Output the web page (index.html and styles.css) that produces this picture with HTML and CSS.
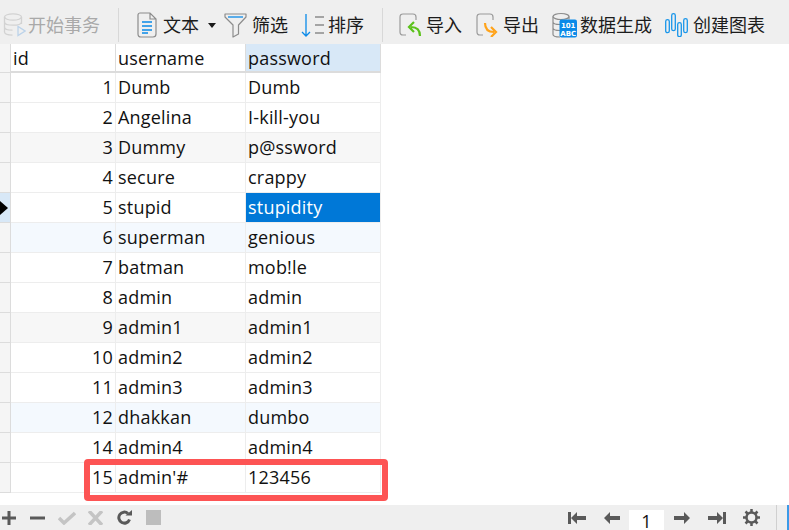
FILE: index.html
```html
<!DOCTYPE html>
<html lang="zh">
<head>
<meta charset="utf-8">
<title>users</title>
<link rel="stylesheet" href="styles.css">
</head>
<body>
<div class="app">
  <header class="toolbar">
    <div class="tool disabled tool-begin">
      <svg class="ic" width="24" height="26" viewBox="0 0 24 26" fill="none" stroke="#d2d2d2" stroke-width="1.3"><ellipse cx="11" cy="5" rx="8.5" ry="3.2"/><path d="M2.5 5v15c0 2 3 3 8 3.2M19.500 5v7M2.500 10c0 2 3.500 3.200 8.500 3.200s8.500-1.200 8.500-3.200M2.500 15c0 2 3 3.200 8 3.200"/><path d="M16 14.500v9l7-4.500z" stroke="#bcd3ea"/></svg>
      <span>开始事务</span>
    </div>
    <i class="sep sep-a"></i>
    <div class="tool tool-text">
      <svg class="ic" width="20" height="26" viewBox="0 0 20 26" fill="none"><path d="M3 1h10l6 6v15c0 2-1 3-3 3H4c-2 0-3-1-3-3V3c0-1 1-2 2-2zM13 1v6h6" stroke="#8c8c8c" stroke-width="1.200"/><path d="M5 10h10M5 14h10M5 18h10M5 21h6" stroke="#0a8ae8" stroke-width="1.300"/></svg>
      <span>文本</span>
      <svg class="caret" width="8" height="5" viewBox="0 0 8 5"><path d="M0 0h8L4 5z" fill="#1a1a1a"/></svg>
    </div>
    <div class="tool tool-filter">
      <svg class="ic" width="23" height="26" viewBox="0 0 23 26" fill="none"><path d="M1 2h21v3l-7.500 8v9L9 25V13L1 5z" stroke="#8c8c8c" stroke-width="1.200" stroke-linejoin="round"/><path d="M4 5h15" stroke="#0a8ae8" stroke-width="1.300"/></svg>
      <span>筛选</span>
    </div>
    <div class="tool tool-sort">
      <svg class="ic" width="24" height="26" viewBox="0 0 24 26" fill="none"><path d="M5 2v22M1 20l4 4 4-4" stroke="#0a8ae8" stroke-width="1.300"/><path d="M14 5h9M14 13h9M14 21h9" stroke="#8c8c8c" stroke-width="1.300"/></svg>
      <span>排序</span>
    </div>
    <i class="sep sep-b"></i>
    <div class="tool tool-import">
      <svg class="ic" width="23" height="24" viewBox="0 0 23 24" fill="none"><path d="M7 22H4c-2 0-3-1-3-3V4c0-2 1-3 3-3h10c2 0 3 1 3 3v3" stroke="#9a9a9a" stroke-width="1.200"/><path d="M21 23c0-6-3-9-9-9M15 9l-5 5 5 5" stroke="#5cc21c" stroke-width="2.200"/></svg>
      <span>导入</span>
    </div>
    <div class="tool tool-export">
      <svg class="ic" width="23" height="24" viewBox="0 0 23 24" fill="none"><path d="M7 22H4c-2 0-3-1-3-3V4c0-2 1-3 3-3h10c2 0 3 1 3 3v3" stroke="#9a9a9a" stroke-width="1.200"/><path d="M9 10c0 6 3 9 9 9M15 14l5 5-5 5" stroke="#ffa31a" stroke-width="2.200"/></svg>
      <span>导出</span>
    </div>
    <div class="tool tool-gen">
      <svg class="ic" width="25" height="26" viewBox="0 0 25 26" fill="none" stroke="#8c8c8c" stroke-width="1.200"><ellipse cx="9" cy="4.500" rx="8" ry="3"/><path d="M1 4.500v18c0 1.500 3 2.500 7 2.500M17 4.500v3M1 10c0 1.500 3 2.500 7 2.500M1 16c0 1.500 3 2.500 7 2.500"/><rect x="7.500" y="7.500" width="17.500" height="18" rx="2" fill="#0a8ae8" stroke="none"/><text x="16.200" y="15.500" class="gen-t">101</text><text x="16.200" y="23.500" class="gen-t">ABC</text></svg>
      <span>数据生成</span>
    </div>
    <div class="tool tool-chart">
      <svg class="ic" width="23" height="24" viewBox="0 0 23 24" fill="none" stroke="#1a96ea" stroke-width="1.300"><rect x="0.700" y="6.700" width="3.600" height="13" rx="1.800"/><rect x="6.700" y="0.700" width="3.600" height="17" rx="1.800"/><rect x="12.700" y="9.700" width="3.600" height="14" rx="1.800"/><rect x="18.700" y="5.700" width="3.600" height="14" rx="1.800"/></svg>
      <span>创建图表</span>
    </div>
  </header>

  <main class="grid">
    <div class="row head"><div class="mark"></div><div class="cell">id</div><div class="cell">username</div><div class="cell focus-head">password</div></div>
    <div class="row"><div class="mark"></div><div class="cell num">1</div><div class="cell">Dumb</div><div class="cell">Dumb</div></div>
    <div class="row"><div class="mark"></div><div class="cell num">2</div><div class="cell">Angelina</div><div class="cell">I-kill-you</div></div>
    <div class="row gray"><div class="mark"></div><div class="cell num">3</div><div class="cell">Dummy</div><div class="cell">p@ssword</div></div>
    <div class="row"><div class="mark"></div><div class="cell num">4</div><div class="cell">secure</div><div class="cell">crappy</div></div>
    <div class="row"><div class="mark current"><svg width="8" height="14" viewBox="0 0 8 14"><path d="M0 0l8 7-8 7z" fill="#000"/></svg></div><div class="cell num">5</div><div class="cell">stupid</div><div class="cell selected">stupidity</div></div>
    <div class="row blue"><div class="mark"></div><div class="cell num">6</div><div class="cell">superman</div><div class="cell">genious</div></div>
    <div class="row"><div class="mark"></div><div class="cell num">7</div><div class="cell">batman</div><div class="cell">mob!le</div></div>
    <div class="row"><div class="mark"></div><div class="cell num">8</div><div class="cell">admin</div><div class="cell">admin</div></div>
    <div class="row gray"><div class="mark"></div><div class="cell num">9</div><div class="cell">admin1</div><div class="cell">admin1</div></div>
    <div class="row"><div class="mark"></div><div class="cell num">10</div><div class="cell">admin2</div><div class="cell">admin2</div></div>
    <div class="row"><div class="mark"></div><div class="cell num">11</div><div class="cell">admin3</div><div class="cell">admin3</div></div>
    <div class="row blue"><div class="mark"></div><div class="cell num">12</div><div class="cell">dhakkan</div><div class="cell">dumbo</div></div>
    <div class="row"><div class="mark"></div><div class="cell num">14</div><div class="cell">admin4</div><div class="cell">admin4</div></div>
    <div class="row"><div class="mark"></div><div class="cell num">15</div><div class="cell">admin'#</div><div class="cell">123456</div></div>
    <div class="redbox"></div>
  </main>

  <footer class="statusbar">
    <div class="left-tools">
      <svg class="b-plus" width="14" height="14" viewBox="0 0 14 14"><path d="M0 7h14M7 0v14" stroke="#595959" stroke-width="3"/></svg>
      <svg class="b-minus" width="15" height="14" viewBox="0 0 15 14"><path d="M0 7h15" stroke="#595959" stroke-width="3"/></svg>
      <svg class="b-check" width="18" height="14" viewBox="0 0 18 14" fill="none"><path d="M1 7l5 5L17 2" stroke="#c4c4c4" stroke-width="3.500"/></svg>
      <svg class="b-x" width="15" height="14" viewBox="0 0 15 14" fill="none"><path d="M1 0l13 14M14 0L1 14" stroke="#c4c4c4" stroke-width="3.500"/></svg>
      <svg class="b-ref" width="15" height="15" viewBox="0 0 15 15" fill="none"><path d="M12.500 9.500A5.500 5.500 0 1 1 11 3.500" stroke="#595959" stroke-width="3"/><path d="M8.500 5.500H15V0z" fill="#595959"/></svg>
      <svg class="b-stop" width="15" height="15" viewBox="0 0 15 15"><rect width="15" height="15" fill="#bdbdbd"/></svg>
    </div>
    <div class="pager">
      <svg class="b-first" width="18" height="12" viewBox="0 0 18 12"><path d="M0 0h3v12H0zM3 6l6-6v4h9v4H9v4z" fill="#595959"/></svg>
      <svg class="b-prev" width="16" height="12" viewBox="0 0 16 12"><path d="M0 6l6-6v4h10v4H6v4z" fill="#595959"/></svg>
      <div class="page">1</div>
      <svg class="b-next" width="16" height="12" viewBox="0 0 16 12"><path d="M16 6l-6-6v4H0v4h10v4z" fill="#595959"/></svg>
      <svg class="b-last" width="18" height="12" viewBox="0 0 18 12"><path d="M18 0h-3v12h3zM15 6L9 0v4H0v4h9v4z" fill="#595959"/></svg>
      <svg class="b-gear" width="17" height="17" viewBox="0 0 17 17" fill="none"><circle cx="8.500" cy="8.500" r="5" stroke="#595959" stroke-width="2.500"/><path d="M8.500 0v3M8.500 14v3M0 8.500h3M14 8.500h3M2.500 2.500l2 2M12.500 12.500l2 2M14.500 2.500l-2 2M4.500 12.500l-2 2" stroke="#595959" stroke-width="2.500"/></svg>
      <i class="bar-sep"></i>
      <i class="blue-edge"></i>
    </div>
  </footer>
</div>
</body>
</html>
```

FILE: styles.css
```css
html, body {
  margin: 0;
  padding: 0;
  background: #fff;
}
.app {
  width: 789px;
  height: 530px;
  display: flex;
  flex-direction: column;
  overflow: hidden;
  font-family: "Noto Sans CJK SC", "Noto Sans", sans-serif;
}
.toolbar {
  height: 44px;
  flex: none;
  background: #efefef;
  display: flex;
  align-items: center;
  box-sizing: border-box;
  padding: 6px 0 0 2px;
  font-size: 18px;
  color: #1c1c1c;
  white-space: nowrap;
}
.tool {
  display: flex;
  align-items: center;
}
.tool span {
  line-height: 26px;
  margin-bottom: 2px;
}
.ic {
  flex: none;
}
.disabled {
  color: #a9a9a9;
}
.tool-begin span { margin-left: 2px; }
.sep {
  width: 1px;
  height: 34px;
  background: #d8d8d8;
  flex: none;
}
.sep-a { margin-left: 18px; }
.tool-text { margin-left: 18px; }
.tool-text span { margin-left: 6px; }
.caret { margin-left: 9px; }
.tool-filter { margin-left: 8px; }
.tool-filter span { margin-left: 5px; }
.tool-sort { margin-left: 13px; }
.tool-sort span { margin-left: 3px; }
.sep-b { margin-left: 18px; }
.tool-import { margin-left: 16px; }
.tool-import span { margin-left: 4px; }
.tool-export { margin-left: 14px; }
.tool-export span { margin-left: 4px; }
.tool-gen { margin-left: 13px; }
.tool-gen span { margin-left: 3px; }
.tool-chart { margin-left: 13px; }
.tool-chart span { margin-left: 5px; }
.gen-t {
  font-family: "DejaVu Sans", sans-serif;
  font-size: 7px;
  font-weight: 700;
  fill: #fff;
  stroke: none;
  text-anchor: middle;
}

.grid {
  position: relative;
  flex: 1;
  font-family: "Open Sans", "Noto Sans", sans-serif;
  font-size: 18px;
  letter-spacing: 0.2px;
  color: #111;
}
.row {
  display: grid;
  grid-template-columns: 11px 105px 130px 135px;
  width: 381px;
  height: 30px;
  box-sizing: border-box;
}
.head {
  height: 29px;
}
.mark {
  box-sizing: border-box;
  background: #f5f5f5;
  border-right: 1px solid #dcdcdc;
  border-bottom: 1px solid #dcdcdc;
  display: flex;
  align-items: center;
}
.current {
  background: #d8e8f7;
}
.cell {
  box-sizing: border-box;
  padding: 0 2px;
  border-right: 1px solid #ededed;
  border-bottom: 1px solid #ededed;
  line-height: 28px;
  white-space: nowrap;
  overflow: hidden;
}
.head .cell {
  background: #fff;
  border-right-color: #dcdcdc;
  border-bottom: 2px solid #dcdcdc;
  line-height: 28px;
}
.head .focus-head {
  background: #d8e8f7;
}
.num {
  text-align: right;
}
.gray .cell {
  background: #f7f7f7;
}
.blue .cell {
  background: #f4f9fe;
}
.selected {
  background: #0078d7;
  color: #fff;
}
.redbox {
  position: absolute;
  left: 84px;
  top: 415px;
  width: 304px;
  height: 42px;
  box-sizing: border-box;
  border: 6px solid #fd5454;
  border-radius: 4px;
}

.statusbar {
  height: 25px;
  flex: none;
  background: #efefef;
  display: flex;
  justify-content: space-between;
  align-items: center;
  position: relative;
}
.left-tools, .pager {
  display: flex;
  align-items: center;
}
.left-tools { padding-left: 2px; }
.b-minus { margin-left: 14px; }
.b-check { margin-left: 13px; }
.b-x { margin-left: 12px; }
.b-ref { margin-left: 14px; }
.b-stop { margin-left: 14px; }
.pager { height: 25px; }
.b-prev { margin-left: 18px; }
.page {
  width: 35px;
  height: 18px;
  margin: 5px 0 0 9px;
  padding-top: 2px;
  background: #fff;
  font-family: "Open Sans", sans-serif;
  font-size: 18px;
  line-height: 18px;
  text-align: center;
  color: #111;
}
.b-next { margin-left: 10px; }
.b-last { margin-left: 18px; }
.b-gear { margin-left: 17px; }
.bar-sep {
  width: 1px;
  height: 25px;
  background: #d0d0d0;
  margin-left: 16px;
}
.blue-edge {
  width: 2px;
  height: 25px;
  background: #3b9be8;
  margin-left: 10px;
}
```
